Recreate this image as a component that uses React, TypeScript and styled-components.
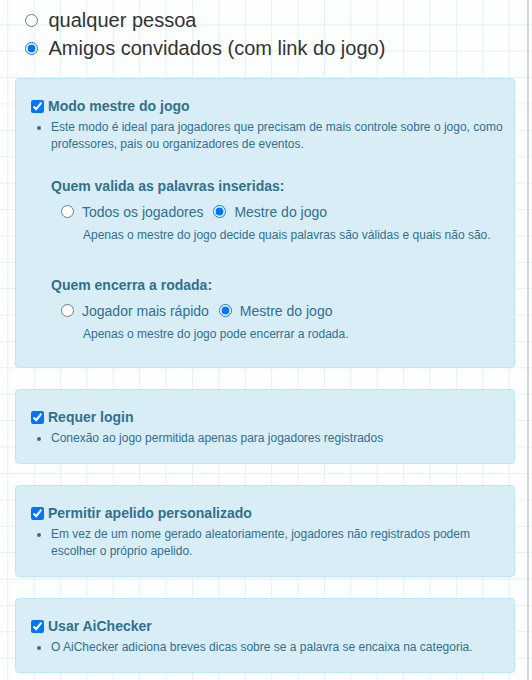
import styled, { createGlobalStyle } from 'styled-components';

const GlobalStyle = createGlobalStyle`
    body {
        margin: 0;
        font-family: "Liberation Sans", Arial, Helvetica, sans-serif;
        background-color: #fdfefe;
        background-image:
            linear-gradient(to right, #e4f0f4 1px, transparent 1px),
            linear-gradient(to bottom, #e4f0f4 1px, transparent 1px);
        background-size: 26.4px 26.4px;
        background-position: 7.3px 24.3px;
    }
`;

const Page = styled.div`
    box-sizing: border-box;
    width: 529px;
    min-height: 680px;
    padding: 6px 12px 20px 15px;
    border-right: 2px solid #d6d6d6;
`;

const Audience = styled.div`
    display: flex;
    flex-direction: column;
    margin-bottom: 16px;
`;

const AudienceOption = styled.label`
    display: flex;
    align-items: center;
    height: 28px;
    font-size: 20px;
    color: #333;
    padding-left: 10px;

    input {
        margin: 0 10.5px 0 0;
        width: 13px;
        height: 13px;
    }
`;

const Cards = styled.div`
    display: flex;
    flex-direction: column;
    gap: 21px;
`;

const Card = styled.div`
    background: #d9edf7;
    border: 1px solid #bce8f1;
    border-radius: 4px;
    color: #31708f;
    padding: 17px 10px 16px 15px;
`;

const CardTitle = styled.label`
    display: flex;
    align-items: center;
    font-size: 14px;
    font-weight: 700;
    line-height: 20px;

    input {
        margin: 0 4px 0 0;
        width: 13px;
        height: 13px;
    }
`;

const Bullets = styled.ul`
    margin: 3px 0 0;
    padding-left: 20px;
    font-size: 12px;
    line-height: 17px;
`;

const Group = styled.div`
    margin: 22.5px 0 0 20px;
    padding-bottom: 8.5px;
`;

const GroupTitle = styled.div`
    font-size: 14px;
    font-weight: 700;
    line-height: 20px;
`;

const Choices = styled.div`
    display: flex;
    align-items: center;
    margin-top: 6.3px;
`;

const Choice = styled.label`
    display: flex;
    align-items: center;
    font-size: 14px;
    line-height: 20px;
    margin-left: 10px;

    input {
        margin: 0 8px 0 0;
        width: 13px;
        height: 13px;
    }
`;

const Note = styled.div`
    margin-top: 4.8px;
    padding-left: 32px;
    font-size: 12px;
    line-height: 17px;
`;

interface ChoiceGroupProps {
    title: string
    name: string
    options: string[]
    selected: number
    note: string
}

const ChoiceGroup = (props: ChoiceGroupProps) => {
    const { title, name, options, selected, note } = props
    return (
        <Group>
            <GroupTitle>{title}</GroupTitle>
            <Choices>
                {options.map((option, i) => (
                    <Choice key={option}>
                        <input type="radio" name={name} defaultChecked={i === selected} />
                        {option}
                    </Choice>
                ))}
            </Choices>
            <Note>{note}</Note>
        </Group>
    )
}

interface SettingProps {
    title: string
    bullets: string[]
    children?: React.ReactNode
}

const Setting = (props: SettingProps) => {
    const { title, bullets, children } = props
    return (
        <Card>
            <CardTitle>
                <input type="checkbox" defaultChecked />
                {title}
            </CardTitle>
            <Bullets>
                {bullets.map((b) => <li key={b}>{b}</li>)}
            </Bullets>
            {children}
        </Card>
    )
}

const App = () => {
    return (
        <>
            <GlobalStyle />
            <Page>
                <Audience>
                    <AudienceOption>
                        <input type="radio" name="audience" />
                        qualquer pessoa
                    </AudienceOption>
                    <AudienceOption>
                        <input type="radio" name="audience" defaultChecked />
                        Amigos convidados (com link do jogo)
                    </AudienceOption>
                </Audience>
                <Cards>
                    <Setting
                        title="Modo mestre do jogo"
                        bullets={['Este modo é ideal para jogadores que precisam de mais controle sobre o jogo, como professores, pais ou organizadores de eventos.']}
                    >
                        <ChoiceGroup
                            title="Quem valida as palavras inseridas:"
                            name="validate"
                            options={['Todos os jogadores', 'Mestre do jogo']}
                            selected={1}
                            note="Apenas o mestre do jogo decide quais palavras são válidas e quais não são."
                        />
                        <ChoiceGroup
                            title="Quem encerra a rodada:"
                            name="finish"
                            options={['Jogador mais rápido', 'Mestre do jogo']}
                            selected={1}
                            note="Apenas o mestre do jogo pode encerrar a rodada."
                        />
                    </Setting>
                    <Setting
                        title="Requer login"
                        bullets={['Conexão ao jogo permitida apenas para jogadores registrados']}
                    />
                    <Setting
                        title="Permitir apelido personalizado"
                        bullets={['Em vez de um nome gerado aleatoriamente, jogadores não registrados podem escolher o próprio apelido.']}
                    />
                    <Setting
                        title="Usar AiChecker"
                        bullets={['O AiChecker adiciona breves dicas sobre se a palavra se encaixa na categoria.']}
                    />
                </Cards>
            </Page>
        </>
    )
}

export default App
